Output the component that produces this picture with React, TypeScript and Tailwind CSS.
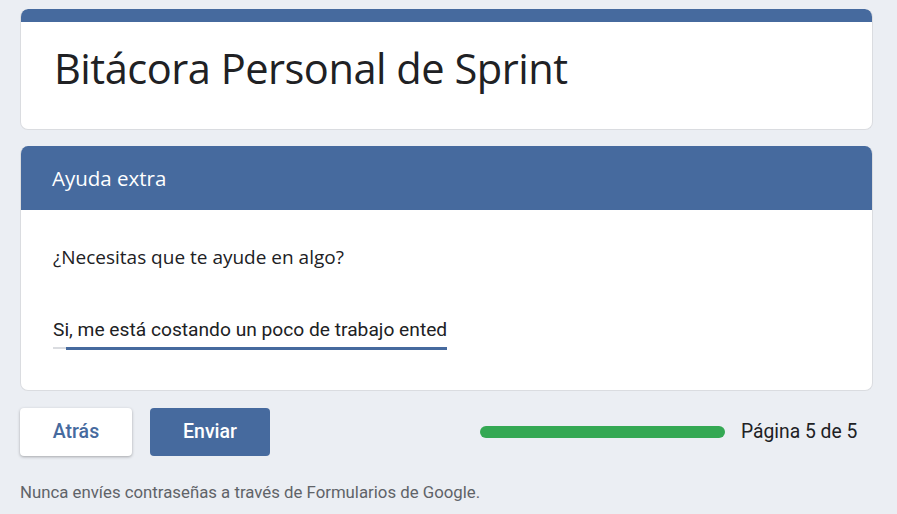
import React from "react";

export default function App() {
  return (
    <div className="w-[897px] h-[514px] bg-[#ebeef3] overflow-hidden" style={{ fontFamily: "Roboto, 'Liberation Sans', sans-serif" }}>
      <div className="pt-[9px] pl-[20px] w-[873px] flex flex-col">
        <div className="rounded-lg bg-white border border-[#dadce0] border-t-0 overflow-hidden">
          <div className="h-[13px] bg-[#466a9e] rounded-t-lg -mx-px" />
          <div className="h-[107px] pl-[33px] pt-[16px]">
            <h1 className="text-[41.6px] leading-[60px] text-[#202124] font-['Open_Sans',sans-serif] tracking-[-0.5px]">
              Bitácora Personal de Sprint
            </h1>
          </div>
        </div>

        <div className="mt-[16px] rounded-lg bg-white border border-[#dadce0] border-t-0 overflow-hidden">
          <div className="h-[64px] bg-[#466a9e] -mx-px flex items-center pl-[32px]">
            <span className="text-white text-[20.5px] font-['Open_Sans',sans-serif]">Ayuda extra</span>
          </div>
          <div className="h-[180px] pl-[32px] pt-[33px]">
            <div className="text-[19px] leading-[28px] text-[#202124] font-['Open_Sans',sans-serif]">¿Necesitas que te ayude en algo?</div>
            <div className="mt-[48px] w-[394px]">
              <div className="text-[19.2px] text-[#202124] leading-[22px] whitespace-nowrap">Si, me está costando un poco de trabajo ented</div>
              <div className="mt-[6px] flex h-[2px]">
                <div className="w-[13px] h-[2px] bg-[#dadce0]" />
                <div className="flex-1 h-[3px] bg-[#466a9e]" />
              </div>
            </div>
          </div>
        </div>

        <div className="mt-[17px] flex items-center h-[48px]">
          <button className="w-[112px] h-[48px] rounded-[4px] bg-white shadow-[0_1px_3px_rgba(0,0,0,0.3)] text-[#466a9e] text-[19.5px] font-medium">
            Atrás
          </button>
          <button className="ml-[18px] w-[120px] h-[48px] rounded-[4px] bg-[#466a9e] text-white text-[19.5px] font-medium">
            Enviar
          </button>
          <div className="ml-[210px] w-[245px] h-[12px] -mt-[1px] rounded-full bg-[#34a853]" />
          <div className="ml-[16px] text-[19.3px] text-[#202124]">Página 5 de 5</div>
        </div>

        <div className="mt-[24px] text-[16.8px] text-[#5f6368]">
          Nunca envíes contraseñas a través de Formularios de Google.
        </div>
      </div>
    </div>
  );
}
